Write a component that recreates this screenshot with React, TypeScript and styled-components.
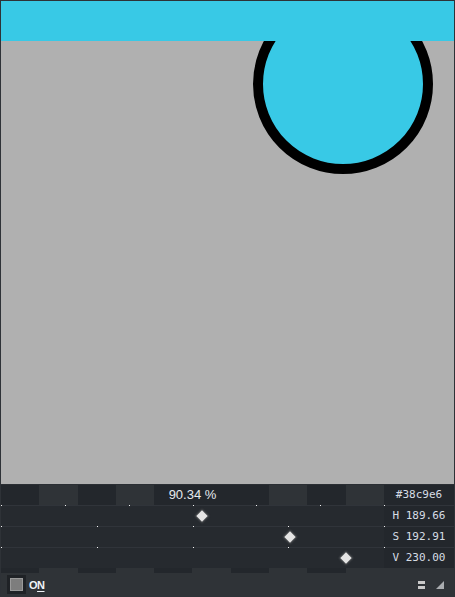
import React from 'react';
import styled, { createGlobalStyle } from 'styled-components';

const GlobalStyle = createGlobalStyle`
  html, body {
    margin: 0;
    padding: 0;
    background: #2b2f34;
  }
`;

const SLIDER_WIDTH = 383;

export default function App() {
  return (
    <>
      <GlobalStyle />
      <Window>
        <Canvas>
          <TopBar />
          <Circle />
        </Canvas>

        <Panel>
          <SliderColumn>
            <Checker>
              <Percent>90.34 %</Percent>
            </Checker>
            {SLIDERS.map((s) => (
              <SliderRow key={s.name}>
                {[...Array(s.divisions + 1)].map((_, i) => (
                  <Tick key={i} style={{ left: (i * SLIDER_WIDTH) / s.divisions }} />
                ))}
                <Handle style={{ left: (s.value / s.max) * SLIDER_WIDTH - 0.5 }} />
              </SliderRow>
            ))}
            <Checker $short />
          </SliderColumn>

          <ValueColumn>
            <ValueCell>#38c9e6</ValueCell>
            {SLIDERS.map((s) => (
              <ValueCell key={s.name} $divided>
                {s.name} {s.value.toFixed(2)}
              </ValueCell>
            ))}
          </ValueColumn>
        </Panel>

        <BottomBar>
          <Toggle>
            <CheckBox />
            <OnLabel>
              O<u>N</u>
            </OnLabel>
          </Toggle>
          <Tools>
            <svg width="7" height="8" viewBox="0 0 7 8">
              <rect x="0" y="0" width="7" height="3" fill="#c9c9c9" />
              <rect x="0" y="5" width="7" height="3" fill="#c9c9c9" />
            </svg>
            <svg width="8" height="8" viewBox="0 0 8 8">
              <polygon points="8,0 8,8 0,8" fill="#a9acaf" />
            </svg>
          </Tools>
        </BottomBar>
      </Window>
    </>
  );
}

const Window = styled.div`
  width: 455px;
  height: 597px;
  box-sizing: border-box;
  border: 1px solid #2e3237;
  display: flex;
  flex-direction: column;
  background: #2f3337;
  font-family: 'Liberation Sans', Arial, sans-serif;
`;

const Canvas = styled.div`
  position: relative;
  height: 483px;
  background: #b0b0b0;
  overflow: hidden;
`;

const TopBar = styled.div`
  position: relative;
  z-index: 1;
  height: 40px;
  background: #38c9e6;
`;

const Circle = styled.div`
  position: absolute;
  left: 252px;
  top: -7px;
  width: 180px;
  height: 180px;
  box-sizing: border-box;
  border-radius: 50%;
  border: 10px solid #000;
  background: #38c9e6;
`;

const Panel = styled.div`
  display: grid;
  grid-template-columns: ${SLIDER_WIDTH}px 1fr;
  border-top: 1px solid #2b2f34;
`;

const SliderColumn = styled.div`
  display: flex;
  flex-direction: column;
`;

const Checker = styled.div<{ $short?: boolean }>`
  height: ${(p) => (p.$short ? 5 : 20)}px;
  display: flex;
  justify-content: center;
  background: repeating-linear-gradient(
    90deg,
    #23272c 0 38.3px,
    #2f3337 38.3px 76.6px
  );
`;

const Percent = styled.div`
  width: 77px;
  height: 20px;
  background: #23272c;
  color: #e6eaee;
  font-size: 13px;
  line-height: 20px;
  text-align: center;
`;

const SliderRow = styled.div`
  position: relative;
  height: 20px;
  border-top: 1px solid #30343a;
  background: #262a2f;
`;

const Tick = styled.span`
  position: absolute;
  top: -1px;
  width: 1px;
  height: 1px;
  background: #f2f2f2;
`;

const Handle = styled.span`
  position: absolute;
  top: 50%;
  width: 8px;
  height: 8px;
  background: #e4e4e4;
  transform: translate(-50%, -50%) rotate(45deg);
  box-shadow: 0 0 2px 1px rgba(140, 140, 140, 0.45);
`;

const ValueColumn = styled.div`
  display: flex;
  flex-direction: column;
`;

const ValueCell = styled.div<{ $divided?: boolean }>`
  height: 20px;
  border-top: ${(p) => (p.$divided ? '1px solid #30343a' : 'none')};
  background: #23272c;
  color: #d6dde5;
  font-family: 'DejaVu Sans Mono', 'Liberation Mono', monospace;
  font-size: 11px;
  line-height: 20px;
  text-align: center;
`;

const BottomBar = styled.div`
  flex: 1;
  display: flex;
  align-items: center;
  justify-content: space-between;
  padding: 0 10px 0 6px;
  background: #2f3337;
`;

const Toggle = styled.div`
  display: flex;
  align-items: center;
  gap: 6px;
`;

const CheckBox = styled.div`
  width: 11px;
  height: 11px;
  border: 1px solid #9a9a9a;
  background: #7d7d7d;
  box-shadow: 0 0 0 3px #1f2226;
  margin-left: 3px;
`;

const OnLabel = styled.span`
  color: #f0f4f8;
  font-size: 11px;
  font-weight: bold;
  letter-spacing: -0.5px;

  u {
    text-underline-offset: 2px;
  }
`;

const Tools = styled.div`
  display: flex;
  align-items: center;
  gap: 11px;
`;

const SLIDERS = [
  { name: 'H', value: 189.66, max: 360, divisions: 6 },
  { name: 'S', value: 192.91, max: 255, divisions: 4 },
  { name: 'V', value: 230.0, max: 255, divisions: 4 },
];
